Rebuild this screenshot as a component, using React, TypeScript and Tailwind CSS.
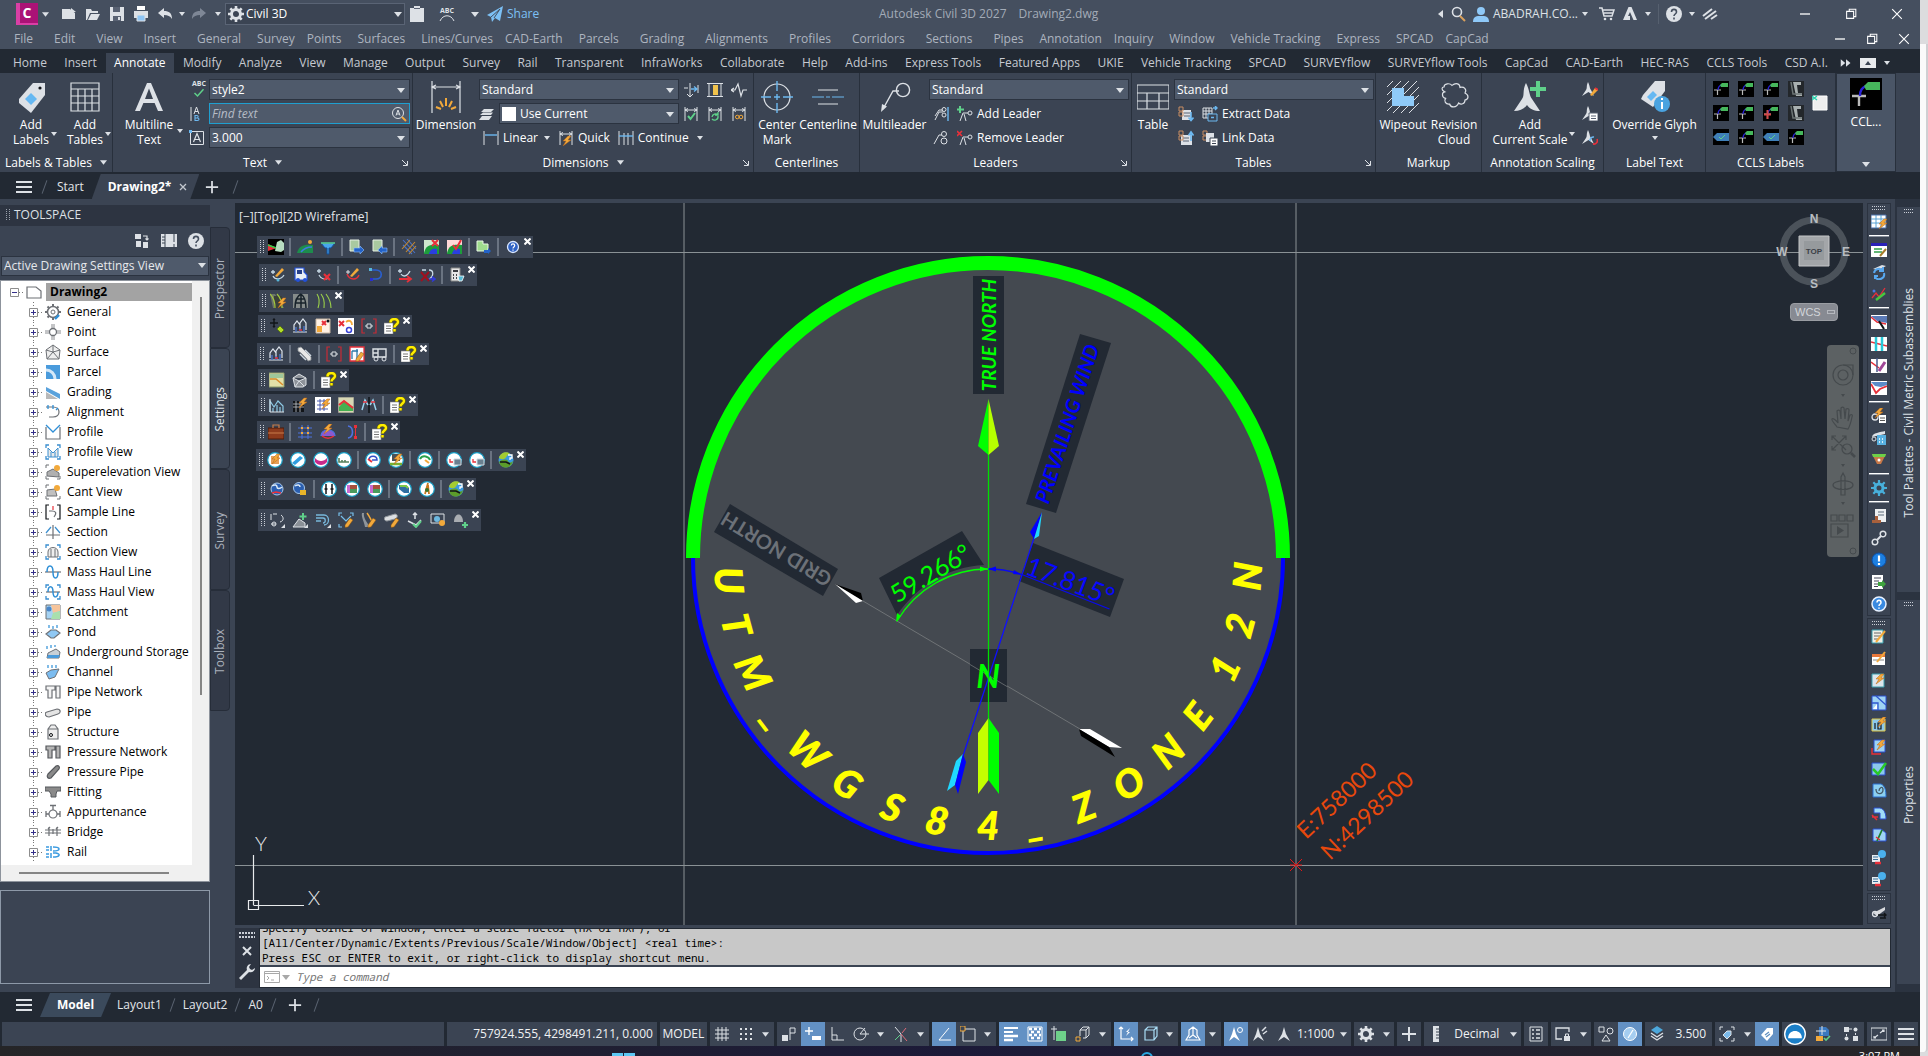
import React from 'react';

type Shape = [d: string, fill?: string, stroke?: string, width?: number];

const W = '#dde1e6';
const B = '#6cb8f0';
const G = '#5fd08a';
const O = '#f2a93b';
const R = '#e8303a';
const K = '#111418';
const D = '#6d7075';

const circle = (x: number, y: number, r: number) =>
  `M${x - r} ${y}a${r} ${r} 0 1 0 ${2 * r} 0a${r} ${r} 0 1 0 ${-2 * r} 0z`;
const box = (x: number, y: number, w: number, h: number) => `M${x} ${y}h${w}v${h}h${-w}z`;
const bolt = (x: number, y: number): Shape => [`M${x + 5} ${y}l-5 5h3l-3 5l8-6h-3l3-4z`, O, '#b8651b', 0.5];
const ring = (color = '#1aa0c8'): Shape => [circle(8, 8, 7.3), '#ffffff', color, 1.2];
const dim: Shape = ['M2 1v14M14 1v14M2 4h12M5 2.5L2 4l3 1.5M11 2.5L14 4l-3 1.5', 'none', W];
const frame: Shape = ['M1 4V1h3M12 1h3v3M15 12v3h-3M4 15H1v-3', 'none', '#3b8fd0', 1.3];
const pencil: Shape = ['M7 13l5-7 3 2-5 7-3 .5z', O, '#7a4a12', 0.5];
const question: Shape[] = [
  [box(0, 5, 9, 11), '#ffffff', '#888888', 0.6],
  ['M2 8h5M2 10.500h5M2 13h5', 'none', '#555555', 0.8],
  ['M6.500 4.500C6.500 0 14 0 14 4c0 2.500-3.500 2.500-3.500 5.500M10.500 11v2.500', 'none', '#6b6400', 3.6],
  ['M6.500 4.500C6.500 0 14 0 14 4c0 2.500-3.500 2.500-3.500 5.500M10.500 11v2.500', 'none', '#ffee00', 2.4],
];
const cclsArt: Shape[] = [
  [box(0, 0, 16, 16), '#000000'],
  ['M1 9h7M4.500 9v5', 'none', '#b9b9b9', 1.2],
  ['M5 9c0-3 1-4 3-5', 'none', '#2a22d8', 1.2],
  ['M7 4l2-2h6v4H8z', '#46b75c'],
];

const art: Record<string, Shape[]> = {
  new: [['M1 3h8l5 4v6H1z', W], ['M10 2l5 4h-5z', W]],
  open: [['M1 3h5l1 2h6v2H5l-3 7H1z', W], ['M6 8h9l-3 6H3z', W]],
  save: [['M1 1h14v14H1z', W], [box(4, 1, 7, 5), '#596273'], [box(4, 10, 8, 5), '#596273'], [box(9, 11, 2, 3), W]],
  print: [[box(4, 0, 8, 4), '#ffffff'], [box(1, 5, 14, 7), W], [box(4, 9, 8, 6), '#8fc6f5', W]],
  undo: [['M1 7l6-5v3c5 0 8 2 8 8-2-3-4-4-8-4v3z', W]],
  redo: [['M15 7L9 2v3c-5 0-8 2-8 8 2-3 4-4 8-4v3z', '#7e8796']],
  gear: [
    [circle(8, 8, 4.5), 'none', W, 3],
    ['M8 0v3M8 13v3M0 8h3M13 8h3M2.300 2.300l2.200 2.200M11.500 11.500l2.200 2.200M2.300 13.700l2.200-2.200M11.500 4.500l2.200-2.200', 'none', W, 2.6],
  ],
  clipboard: [['M1 2h4V0h6v2h4v14H1z', W], [box(5, 2, 6, 1), '#596273']],
  send: [['M0 9L16 0l-3 15-5-3-3 4-1-5z', '#7cc0f5'], ['M4 11l9-8-6 9', 'none', '#454f5f', 1]],
  search: [[circle(7, 6, 4.5), 'none', W, 1.6], ['M10 10l5 5', 'none', '#d9a05c', 2]],
  user: [[circle(8, 5, 4), '#8fc9f8'], ['M0 16c0-6 4-6 8-6s8 0 8 6z', '#8fc9f8']],
  cart: [['M0 2h3l2 8h8l2-6H4M5 7h9', 'none', W, 1.5], [circle(6, 13, 1.3), W], [circle(12, 13, 1.3), W]],
  autodesk: [['M6.500 1h3L15 14h-3.500L8 6l-2 4h2v4H1z', W]],
  help: [[circle(8, 8, 8), W], ['M5.500 6c0-3.500 5-3.500 5 0 0 2-2.500 2-2.500 4M8 11.500v2', 'none', '#454f5f', 1.6]],
  stripes: [['M1 10l9-7M3 13L14 5M9 13l6-4', 'none', W, 2]],
  minus: [['M3 8h10', 'none', '#ffffff', 1.3]],
  restore: [['M3 5h8v8H3zM6 5V2.500h7.500V11H11', 'none', '#ffffff', 1.2]],
  close: [['M2.500 2.500l11 11M13.500 2.500l-11 11', 'none', '#ffffff', 1.3]],
  closeTab: [['M2 2l12 12M14 2L2 14', 'none', '#c3c8cf', 2.6]],
  plus: [['M8 1v14M1 8h14', 'none', W, 2]],
  menu: [['M0 3h16M0 8h16M0 13h16', 'none', W, 2]],
  ff: [['M1 3l6 5-6 5zM8 3l6 5-6 5z', W]],
  tag: [['M2 9L9 1h6v6l-7 9-6-5z', W], ['M5 9l3-3 3 3-3 3z', '#66b8f2'], [circle(12.5, 3.500, 0.8), K]],
  tagInfo: [['M2 7L8 0h5v5l-6 8-6-4z', W], ['M4 8l3-3 2 2-3 3z', '#66b8f2'], [circle(11.500, 11.500, 4), '#4aa3e0'], ['M11.500 10.500v3.500M11.500 8.500v1', 'none', '#ffffff', 1]],
  table: [['M1 1h14v14H1zM1 4h14M1 7.500h14M1 11h14M4.500 4v11M8 4v11M11.500 4v11', 'none', W, 0.6]],
  tableBig: [['M0 2h16v12H0zM0 6h16M0 10h16M5 6v8M11 6v8', 'none', W, 0.6]],
  bigA: [['M1 15L7 1h2l6 14h-2.500l-1.700-4H5.200L3.500 15zM6 9h4L8 3.800z', W]],
  check: [['M2 8l4 4 8-9', 'none', G, 2]],
  abBars: [['M2 1v14', 'none', W], ['M5 8l2.500-7L10 8M6 5.500h3', 'none', W], ['M6 9.500v5h2.500c2 0 2-2.500 0-2.500H6h2c1.500 0 1.500-2.500 0-2.500z', 'none', B, 1.1]],
  boxA: [['M1.500 1.500h13v13h-13z', 'none', W], ['M4.500 12L8 3.500 11.500 12M6 9.500h4', 'none', W, 1.2], [box(0, 0, 3, 3), B]],
  findA: [[circle(7, 7, 5.500), 'none', W], ['M5 9.500L7 4l2 5.500M5.500 8h3', 'none', W], ['M11 11l4 4', 'none', O, 2]],
  dimension: [['M1 0v16M15 0v16M1 3h14M3 2L1 3l2 1M13 2l2 1-2 1', 'none', W, 0.6], ['M8 8.500v4M5 10l1.500 3M11 10l-1.500 3M3 13l2.500 1M13 13l-2.500 1', 'none', O, 1]],
  layers: [['M5 3h10l-3 3H2zM4 6.500h10l-2 2.500H1zM3 10h10l-3 4H0z', W]],
  dimLinear: [['M1 1v14M15 1v14', 'none', W], ['M2 5h12', 'none', B, 1.4]],
  dimQuick: [dim, bolt(5, 6)],
  dimContinue: [['M1 1v14M6 3v12M10 3v12M15 1v14', 'none', W], ['M1 6h14', 'none', B, 1.4]],
  dimBreak: [['M7 1v14M4 12l3 3 3-3M1 6h4M15 3v8', 'none', W], ['M8 7h6M11 4.500L14 7l-3 2.500', 'none', B, 1.4]],
  dimSpace: [['M0 1.500h16M0 14.500h16M2 1.500v13M14 1.500v13', 'none', W], [box(6, 3, 5, 10), '#f0c24b']],
  dimJog: [['M0 8h4l3-6 3 12 2-6h4M3 6L0 8l3 2', 'none', W, 1.2]],
  dimCheck: [dim, ['M5 10l2.500 3L12 7', 'none', G, 2]],
  dimUpdate: [dim, ['M5 11a3.500 3.500 0 0 1 6-2M11 10a3.500 3.500 0 0 1-6 3M11 6v3H8', 'none', G, 1.3]],
  dimInsp: [dim, [circle(6.300, 11, 1.800), 'none', O], [circle(10, 11, 1.800), 'none', O]],
  centerMark: [[circle(8, 8, 6.500), 'none', W, 0.6], ['M8 0v5M8 6.500v3M8 11v5M0 8h5M6.500 8h3M11 8h5', 'none', B, 0.7]],
  centerline: [['M3 4.500h10M3 11.500h10', 'none', W, 0.6], ['M0 8h6M7 8h2M10 8h6', 'none', B, 0.6]],
  mleader: [['M2 14L7 5h3', 'none', W, 0.7], [circle(12, 4.500, 3.300), 'none', W, 0.7], ['M1 15.500l.5-4 2.500 1.300z', W]],
  ldrAlign: [['M2 14l4-8h4M2 10l4-6h4', 'none', W], [circle(11, 3.500, 2), 'none', W], [circle(11, 9, 2), 'none', W], ['M15 1v14', 'none', B, 1.4]],
  ldrCollect: [['M1 14L6 5h3', 'none', W], [circle(11, 4, 2.500), 'none', W], [circle(11, 11, 3), 'none', W]],
  ldrAdd: [['M3 15l3-8h5M9 15L7 8', 'none', W], [circle(13, 7, 2), 'none', W], ['M3 0v7M0 3.500h7', 'none', G, 2]],
  ldrRemove: [['M3 15l3-8h5M9 15L7 8', 'none', W], [circle(13, 7, 2), 'none', W], ['M0 1l5 5M5 1L0 6', 'none', R, 1.6]],
  tblIn: [[box(4, 4, 9, 10), W], ['M6 7h6M6 10h6', 'none', '#596273'], ['M1 1h4v4H1zM1 6h4v4H1z', 'none', '#c98d62'], ['M13 6v8M10.500 11.500l2.500 3 2.500-3', 'none', B, 1.6]],
  tblOut: [[box(3, 5, 11, 10), W], ['M5 8h6M5 11h6', 'none', '#596273'], ['M1 1h4v4H1zM1 6h4v4H1z', 'none', '#c98d62'], ['M13 11V3M10.500 5.500L13 2l2.500 3.500', 'none', B, 1.6]],
  extract: [['M1 2h9v10H1zM1 5h9M1 8h9M4 2v10M7 2v10', 'none', W], [box(6, 8, 9, 7), '#3b4453', B], ['M9 11.500h3M11 2h4M13 0l2 2-2 2', 'none', B, 1.4]],
  linkData: [['M1 1h4v4H1zM1 6h4v4H1z', 'none', '#c98d62'], [box(4, 3, 8, 9), W], [box(8, 8, 8, 8), '#ffffff', '#3b4453'], ['M10 11h4M10 13.500h4', 'none', '#3b4453']],
  wipeout: [['M0 3l3-3M0 7l7-7M0 11L11 0M0 15L15 0M3 16L16 3M7 16l9-9M11 16l5-5', 'none', W, 0.5], ['M2.500 3.500h6v4h5v5h-11z', '#8fcaf8']],
  cloud: [['M3 3c0-2 3-2 4-.8 2-1.600 4-.8 4 1 2-.6 3.600 1 2.500 2.800 2 1 2 3 0 3.500 0 2-2 2.500-3.200 1.500-1 2.500-4 2.500-4.500.5-2 .3-3-1.500-2-2.800-2-.5-2-3-.5-3.300-1.800-1-1.500-2.400-.3-2.400z', 'none', W, 0.6]],
  annoScale: [['M6 1c2 4 1.500 6 3 8l4 6c-3 0-5-1-6.500-3C5 14 3 15 0 15l4-6c1.500-2 0-4 2-8z', W], ['M12 0v8M8 4h8', 'none', G, 2]],
  anno1: [['M6 1c2 4 1.500 6 3 8l3 6-5.500-4L0 15l4-6c1.500-2 0-4 2-8z', W], ['M8 14l5-7 3 2-6 6z', O], ['M13 7l3 2', 'none', R, 2]],
  anno2: [['M6 1c2 4 1.500 6 3 8l3 6-5.500-4L0 15l4-6c1.500-2 0-4 2-8z', W], [box(7, 8, 9, 8), '#ffffff', '#596273'], ['M9 11h5M9 13.500h5', 'none', '#596273']],
  anno3: [['M6 1c2 4 1.500 6 3 8l3 6-5.500-4L0 15l4-6c1.500-2 0-4 2-8z', W], ['M8 12a3.500 3.500 0 0 1 4-4', 'none', B, 1.600], ['M15 10a3.500 3.500 0 0 1-4 5', 'none', R, 1.600]],
  ccls: cclsArt,
  cclsRed: [...cclsArt, ['M4.500 5v9M1 9.500h7', 'none', '#d04a4a', 2]],
  cclsBlue: [[box(0, 0, 16, 16), '#000000'], ['M0 8l4-4h12v8H4z', '#3f7fb8'], ['M6 8l2 2 4-4', 'none', G]],
  cclsPipe: [[box(0, 0, 16, 16), '#23272b'], ['M5 1h8v3H9l1 8h4v3H8z', '#a9b0b0'], ['M3 1l2 12h9', 'none', '#6d7575', 1.5]],
  page: [[box(1, 1, 14, 14), '#eeeeee', '#ffffff'], ['M0 1l5 4M5 1L0 5', 'none', '#2ad4b0', 1.4]],
  // toolspace
  tsSwap: [[box(1, 1, 6, 5), W], [box(2, 8, 5, 6), W], [box(9, 9, 5, 6), W], ['M9 3h4v4M11.500 5.500L13 7l1.500-1.500', 'none', W, 1.2]],
  tsGrid: [[box(0, 1, 16, 13), W], ['M1 4h3M1 7h3M1 10h3M4 1v13M13 1v8M13 11v3', 'none', '#3b4453']],
  doc: [['M1 3h9l5 4v7H1z', '#ffffff', D, 1.2]],
  General: [[circle(8, 8, 5.500), 'none', D, 1.5], [circle(8, 8, 2), 'none', D], ['M8 0v2M0 8h2M8 14v2M2.500 2.500L4 4M12 4l1.500-1.500M4 12l-1.500 1.500M14 8h2', 'none', D, 2], ['M10 15l4-4', 'none', '#2f8fd6', 2.4]],
  Point: [[circle(8, 8, 3.5), 'none', D, 1.3], ['M7 0v4M9 0v4M7 12v4M9 12v4M0 7h4M0 9h4M12 7h4M12 9h4', 'none', D, 0.8]],
  Surface: [['M8 1l7 5-1 9H2L1 6zM8 1v7M1 6l7 2 7-2M8 8l-6 7M8 8l6 7', '#eeeeee', D]],
  Parcel: [[box(1, 1, 14, 14), '#4a9bdc'], ['M1 6c5 0 9 4 9 9', 'none', '#d5e8f8', 3]],
  Grading: [['M1 3v4l14 8v-5z', '#5aa2dc'], ['M1 8v7h12z', '#b9b9b9']],
  Alignment: [['M1 3h7c8 0 8 10 0 10H4', 'none', D, 1.2], ['M3 1v4M8 1v4M13 4l-2 2', 'none', '#2f8fd6', 1.3]],
  Profile: [['M1 3v12h14V3', 'none', D, 1.2], ['M1 1l7 7 7-7', 'none', '#2f8fd6', 1.3]],
  'Profile View': [frame, ['M3 13V4l5 5 5-5v9zM6 8v5M10 8v5', '#e9e9e9', '#3b8fd0']],
  'Superelevation View': [['M1 4V1h3M1 12v3h3M15 12v3h-3', 'none', D], ['M2 12V8l6-3 6 4v4z', '#b0b0b0', D], [circle(12, 4, 3), O]],
  'Cant View': [['M1 4V1h3M1 12v3h3M15 12v3h-3', 'none', D], ['M2 12V6l8-1 2 7z', '#c0c0c0', D], [circle(12, 4, 3), O]],
  'Sample Line': [['M4 1H1v14h3M12 1h3v14h-3', 'none', K, 1.2], ['M4 7h3c4 0 5 2 2 6', 'none', D, 1.2], ['M8 2v4', 'none', R, 1.2]],
  Section: [['M8 1v14M1 11h14', 'none', D, 1.2], ['M1 9l5-6M15 9l-5-6', 'none', '#3b8fd0', 1.2]],
  'Section View': [frame, ['M3 13V8c0-6 10-6 10 0v5zM6 5v8M10 5v8', '#eeeeee', D]],
  'Mass Haul Line': [['M0 8h16', 'none', D, 1.2], ['M2 8c0-8 6-8 6 0s5 8 5 0', 'none', '#2f8fd6', 1.5]],
  'Mass Haul View': [frame, ['M1 8h14', 'none', D, 1.2], ['M3 8c0-7 5-7 5 0s5 6 5 0', 'none', '#2f8fd6', 1.5]],
  Catchment: [[box(1, 1, 14, 14), '#a6d3f3', D], ['M6 1h9v6L8 9z', '#f6c49b'], ['M15 7v8H6l2-6z', '#a9e0ad'], [circle(4, 5, 2.500), '#4a86c8']],
  Pond: [['M1 10l5-4h5l4 3-6 5H6z', '#8fc8f4', D, 1.2], ['M4 1v3M8 2v3M12 1v3', 'none', '#2f8fd6', 1.2]],
  'Underground Storage': [['M2 14l1-5 8-4 4 3-1 6z', '#c9d0d6', D], ['M2 14h11l2-3-12 0z', '#4a9bdc'], ['M2 2v3M6 1v3M10 1v2', 'none', '#2f8fd6', 1.2]],
  Channel: [['M1 9l5-3 8-1-4 8-6 2z', '#7bbcf0', D], ['M3 1v3M7 1v3M11 1v3', 'none', '#2f8fd6', 1.2]],
  'Pipe Network': [['M1 2h9v4H7v8H3V6H1zM11 2h4v12h-4z', '#f4f4f4', D, 1.2]],
  Pipe: [['M2 8l10-3c4 0 4 4 1 5l-9 3c-4 0-5-4-2-5z', '#e4e4e4', D, 1.2]],
  Structure: [['M3 5l3-4h4l3 4v10H3zM3 5h10', '#eeeeee', D, 1.2], [circle(6, 11, 1.500), 'none', K]],
  'Pressure Network': [['M1 2h9v4H7v8H3V6H1zM11 2h4v12h-4z', '#b5b5b5', '#55585c', 1.2]],
  'Pressure Pipe': [['M3 10l8-8c3-1 4 1 3 3l-8 9c-3 1-5-1-3-4z', '#8a8a8a', '#55585c', 1.2]],
  Fitting: [['M0 3h16v4h-4l-1 3v3H6v-3L4 7H0z', '#8a8a8a', '#55585c']],
  Appurtenance: [[circle(8, 10, 4), 'none', D, 1.2], ['M8 1v5M5 1.500h6M1 7v6M15 7v6M1 10h3M12 10h3', 'none', D, 1.3]],
  Bridge: [['M0 6h16M0 9h16M4 3v9M8 5v5M12 3v9M3 5l2-2M11 5l2-2', 'none', D, 1.2]],
  Rail: [['M1 3h3M1 6h3M1 10h3M1 13h3M6 2v5M6 9v5M8 3c8 0 8 4 0 4M8 9h3c5 1 4 4-3 4', 'none', '#3b9be0', 1.5]],
  // drawing toolbars
  terrain: [[box(0, 0, 16, 16), '#000000'], ['M0 5l9 4-9 3z', R], ['M7 12l2-9 4-2 3 3v7l-3 2z', '#b8ddc0'], ['M0 6l8 3', 'none', '#2fd04a', 1.5]],
  hill: [['M0 14c2-8 8-9 16-8v8z', '#1d8c4c'], ['M4 13c4-5 8-5 11-5', 'none', '#3f7be0', 1.5], [circle(13, 3, 2), O]],
  funnel: [['M1 4h14l-4 5H9v6H7V9H5z', '#48a6ec', '#134e9a'], ['M1 4h14', 'none', G, 1.5]],
  exportMap: [['M1 1h9v11H1z', '#a9c9a0', '#e7efe3'], ['M5 9h6V7l4 4-4 4v-2H5z', '#2463c8', '#8fc1ff', 0.6]],
  importMap: [['M1 1h9v11H1z', '#a9c9a0', '#e7efe3'], ['M15 9h-5V7l-4 4 4 4v-2h5z', '#2463c8', '#8fc1ff', 0.6]],
  tracks: [['M2 1l12 13M2 6l9 9M6 0l9 10', 'none', '#4a73c9', 1.1], ['M1 10L9 1M5 13l9-10M8 15l7-8', 'none', '#c98a2e', 1.1]],
  mapX: [[box(0, 1, 15, 14), '#cfe8cf'], ['M0 14c2-8 6-9 15-8v9H0z', '#1d9c3c'], ['M5 15c1-5 4-6 8-5v5z', '#2a3fe0'], ['M8 1l6 6M14 1L8 7', 'none', R, 2]],
  mapCheck: [[box(0, 1, 15, 14), '#ffd9d9'], ['M0 14c2-8 6-9 15-8v9H0z', '#1d9c3c'], ['M5 15c1-5 4-6 8-5v5z', '#2a3fe0'], ['M6 6l3 4 5-9', 'none', R, 2]],
  gridMove: [['M1 2h6v3h5v7H1z', '#9fdc8e', '#e8f7e4'], ['M8 11h4V9l3 3-3 3v-1H8z', '#2463c8']],
  helpBlue: [[circle(8, 8, 5.500), '#2f62c4', '#dce8ff', 1.3], ['M6.300 6.500c0-2.300 3.400-2.300 3.400 0 0 1.500-1.700 1.500-1.700 3M8 10.500v1.200', 'none', '#ffffff', 1.200]],
  nodeEdit: [['M1 5h4M3 3v4M3 9c2 4 8 4 11-1', 'none', '#c8d9e6', 1.3], ['M5 9l7-8 2 2-7 7z', O], [circle(8, 13, 1.500), '#58b6d8']],
  bus: [['M2 1h9v4l3 3v5H2z', '#e9eef4', '#2350d8', 1.2], [box(4, 3, 5, 4), '#27408a'], [circle(5, 13, 2), '#2350d8'], [circle(12, 13, 2), '#2350d8']],
  nodeX: [['M1 4h4M3 2v4M3 8c2 4 6 5 10 3', 'none', '#c8d9e6', 1.3], ['M8 7l6 6M14 7l-6 6', 'none', R, 2.2]],
  nodeRed: [['M2 7c3 7 10 6 12 1', 'none', R, 1.500], ['M5 9l7-8 2 2-7 7z', O], ['M1 5h4M3 3v4', 'none', W]],
  curveBlue: [['M2 3h6c7 0 7 9 0 9H3', 'none', '#2a5fd0', 1.6], [box(1, 1, 3, 3), '#58b6d8'], [box(2, 11, 3, 3), '#2a2fd0']],
  nodeNext: [['M1 4h4M3 2v4M4 7c2 3 6 3 9-3', 'none', '#c8d9e6', 1.3], ['M2 12h11M10 9l4 3-4 3', 'none', R, 1.8]],
  nodeCross: [['M2 3h4M9 3c5 0 5 6 0 9', 'none', '#c8d9e6', 1.3], ['M1 5l8 9M9 5l-8 9', 'none', '#a01020', 2], ['M9 12h6M12 9.500l3 2.500-3 2.500', 'none', '#3038e0', 1.500]],
  calc: [[box(2, 1, 9, 13), '#e6e6e6', '#888888'], ['M4 4h5', 'none', K, 1.600], ['M4 8h1M7 8h1M4 11h1M7 11h1', 'none', K, 1.500], ['M9 9h6l-2 5h-3z', '#56b8d4', '#ffffff', 0.8]],
  road: [['M0 1h5l9 14H3z', '#6b7468'], [box(4, 3, 8, 12), '#3b4038'], ['M0 1c4 4 5 9 5 14M7 1c4 4 5 9 5 14', 'none', '#a4c83e', 1.2], bolt(8, 5)],
  roadGrey: [[box(0, 1, 15, 14), '#858b8a'], ['M2 15C2 8 4 3 8 1M13 15c0-6-1-11-5-14M3 10h10M4 6h8M8 1v14', 'none', '#17222a', 1.500]],
  roadDash: [['M2 15C4 9 3 4 1 1M8 15c1-8-1-11-3-14M15 15c0-6-2-10-5-14', 'none', '#9bd04a', 1.1]],
  moveTag: [['M5 1v8M1 5h8M4 2l1-1 1 1M4 8l1 1 1-1', 'none', K, 1.4], ['M8 11l3-3 4 4-3 3z', '#b4dc2a', '#5b7a10']],
  levels: [['M1 14h14M2 12V7l3-4 3 4v5M8 10V5l3-4 3 4v7', 'none', '#dfe6ee', 1.2], ['M4 14V9M8 14v-4M12 14V8', 'none', '#4b73c9', 1.4], ['M7 12h3', 'none', R, 1.5]],
  house: [[box(1, 1, 14, 14), '#fff1e4', '#c9b7a4'], ['M2 14V8h5v6z', O], ['M7 3l4 4M11 3L7 7', 'none', R, 2], [circle(13, 3, 1.500), K]],
  redraw: [[box(0, 0, 16, 16), '#ffffff'], ['M1 3l5 5M6 3L1 8', 'none', R, 2], ['M8 4c4-3 6 0 6 3', 'none', O, 1.800], [circle(11, 12, 2.500), 'none', '#3a45d8', 1.500]],
  bracket: [['M4 1H1v14h3M12 1h3v14h-3', 'none', '#c82a35', 1.2], ['M4 8h8', 'none', W], [box(6, 6, 4, 4), '#3b4453', W]],
  wrench: [['M1 2l3-1 3 3 7 7v3l-3 1-2-3-5-5-3-2z', '#e8e8e8', '#8b8f94', 0.8], ['M8 4l6 6M3 8l6 6', 'none', '#cfd8e0', 1.5]],
  sheetEdit: [[box(1, 1, 14, 14), '#fbfbff', R, 1.3], ['M3 5h6M3 5v8M8 3v10', 'none', '#2b78a8', 1.3], pencil],
  truck: [['M1 3h13v8H1zM6 3v8M1 7h5', 'none', W, 1.4], [circle(4, 13, 2), 'none', W], [circle(12, 13, 2), 'none', W]],
  q: question,
  profileMap: [[box(0, 1, 15, 14), '#e2e0a8', '#8b9a6b'], [box(1, 2, 13, 4), '#9fc79a'], ['M1 7h6l7 6', 'none', '#d88a2a', 1.500]],
  meshGrey: [['M1 6l6-4 7 4v7l-3 2H3zM1 6l6 3 7-3M7 9l-4 6M7 9l5 5', '#8e939a', W]],
  chartBlue: [['M1 15V4l4 6 4-6 5 5v6M4 15v-4M8 15V8M11 15v-5', 'none', '#8ecbe6', 1.2], ['M1 2v13h14', 'none', W]],
  gridBolt: [[box(1, 4, 11, 11), K], ['M1 7h11M1 10h11M4 4v11M8 4v11', 'none', '#bfc4ca', 0.8], bolt(7, 1)],
  tableBolt: [[box(0, 0, 16, 16), '#ffffff'], ['M2 4h11M2 8h11M2 12h11M5 2v12M9 2v12', 'none', '#3a4ca8', 0.9], bolt(7, 2)],
  redProfile: [[box(0, 0, 16, 16), '#d8d8b4', '#777777'], ['M1 10l5-6 9 6v4H1z', '#46b050'], ['M1 8l5-4 9 7', 'none', R, 2]],
  mirror: [['M8 0v16', 'none', K, 1.500], ['M1 13l3-10 3 5M15 13L12 3 9 8', 'none', '#9bd4ee', 1.500], ['M2 5h4M10 5h4', 'none', R, 1.3]],
  briefcase: [[box(0, 4, 16, 11), '#8e3b1c', '#4b1a0a'], ['M5 4V1h6v3M0 9h16', 'none', '#c87c4a', 1.2]],
  gridNodes: [['M1 4h14M1 9h14M1 13h14M5 1v14M11 1v14', 'none', '#4d72e0', 1], ['M4 4h2M10 4h2M4 9h2M10 9h2', 'none', O, 2.2]],
  dome: [['M1 12c0-8 14-8 14 0', '#8c5ad0', '#4d72e0', 1.4], ['M2 12c4 3 8 3 12 0', 'none', R, 1.500], bolt(4, 0)],
  arcNodes: [['M5 2c6 1 6 11 0 12', 'none', '#4d72e0', 1.600], [box(11, 1, 3, 3), R], [box(11, 12, 3, 3), R], ['M12.500 3v10', 'none', R]],
  rGrid: [ring(), [box(4, 4, 8, 8), '#e6a05a'], bolt(5, 2)],
  rPlane: [ring(), ['M2 11l8-7 3 2-8 7z', '#2f9de0']],
  rBowl: [ring(), ['M2 6c3 4 9 4 12 0v4c-3 4-9 4-12 0z', '#c82a8a']],
  rWall: [ring(), ['M3 6v4h10M6 8v2M9 8v2', 'none', '#57805c', 1.6]],
  rPin: [ring(), ['M4 8c0-5 8-5 8 0H7', 'none', '#3550c8', 1.500], ['M3 7l4 3', 'none', R, 1.800]],
  rRoad: [ring(), [box(4, 2, 8, 7), '#4a5358'], ['M2 12h12', 'none', '#7ab030', 2.500], bolt(6, 2)],
  rPath: [ring(), ['M3 7c3-5 9-2 10 1', 'none', '#2ba04a', 2], ['M8 8l4 3', 'none', O, 2]],
  rCopy: [ring(), [box(8, 7, 7, 6), '#6a8090', '#cfd8df'], ['M4 7v3h3', 'none', R, 1.3]],
  earth: [[circle(8, 8, 7.500), '#3a9ae0'], ['M1 6C2 0 10-1 12 2c-4 1-3 4-6 5s-4-1-5-1z', '#a4cc30'], ['M1 10c3-3 8-3 9-1s3 2 5 0c-1 8-12 9-14 1z', '#5c9c2a'], ['M2 10h6l4 2', 'none', K, 1.600], ['M10 3h4v3h-2v2', 'none', '#ffffff', 1.300]],
  globe: [[circle(8, 8, 6), '#2b5fb0', '#a6c8ec'], ['M3 5c3-2 5-1 5 1s3 2 5 0', 'none', '#dceaf6', 1.500], ['M3 12l4-1 5 1', 'none', R, 1.500]],
  globeTag: [[circle(7, 7, 5.500), '#2b5fb0', '#a6c8ec'], ['M3 5c3-2 5-1 5 1', 'none', '#dceaf6', 1.500], [box(8, 9, 6, 5), '#e8b42a']],
  rLanes: [ring(), ['M5 3v10M11 3v10M3.500 8h3M9.500 8h3M5 5v2M11 5v2', 'none', K, 1.500]],
  rColor: [ring(), [box(3, 4, 3, 8), '#c86ad0'], [box(6, 4, 7, 4), '#a8503c'], [box(6, 8, 7, 4), '#4a9a5c']],
  rStack: [ring(), ['M3 4h7l3 3v5H8L3 8z', '#2f6ea0'], ['M4 5h6l2 2', 'none', '#7cc848', 2]],
  rPerson: [ring(), ['M9 2L6 13M9 4l1 9', 'none', '#c8781e', 1.800], [circle(8, 9, 2), '#38742c']],
  gNode: [['M2 2v6M4 2h4M12 3c3 2 3 6-1 7M2 12h5', 'none', W], [circle(5, 12, 2), 'none', W], ['M12 16l4-4v4z', W]],
  gMesh: [['M1 15l6-8 6 4v4z', '#8a9097', W], ['M11 1v7M7.500 4.500h7', 'none', G, 2], ['M12 16l4-4v4z', W]],
  gContour: [['M1 3h8c6 0 6 10 0 10M1 6h7c3 0 3 5 0 5M1 9h5', 'none', '#78b8dc', 1.3], ['M12 16l4-4v4z', W]],
  gView: [['M1 4V1h3M12 1h3v3M1 12v3h3M3 4l5 5 5-5', 'none', '#78c0ec', 1.2], pencil],
  gRoad: [['M3 1c-1 5 3 9 6 14H4C3 9 0 5 1 1z', '#8f959b'], ['M6 1c3 4 4 7 6 10', 'none', O, 1.500], pencil],
  gPipe: [['M1 5l10-3c3 0 3 4 0 5L3 9C0 9 0 6 1 5z', '#dcdfe2', '#8f959b'], pencil],
  gMove: [['M8 1v6M6 3l2-2 2 2M1 9l8 4 5-5', 'none', W, 1.500], ['M6 12l3 3 5-6', 'none', G, 2]],
  gGear: [['M1 2h13v9H1z', 'none', W], [circle(7, 7, 3), '#6cb8e0'], [circle(12, 11, 3), O]],
  gHill: [['M1 10c0-10 9-10 9 0z', '#a9adb2'], ['M9 13h6M12 10v6', 'none', G, 2.200]],
  // docked strip
  vTable: [[box(0, 1, 15, 13), '#ffffff', '#4b6ea8'], ['M0 5h15M0 9h15M5 1v13M10 1v13', 'none', '#4a9ad0', 0.9], bolt(8, 5)],
  vList: [[box(0, 1, 16, 14), '#ffffff'], [box(0, 1, 16, 3), '#2a22b8'], ['M3 7h8M3 10h8', 'none', '#30a04a', 1.600], ['M9 14l6-7', 'none', '#a87c2a', 2]],
  vSync: [['M2 5l9-4 4 1-7 4z', W], ['M3 9a5 5 0 0 1 9-2M13 9a5 5 0 0 1-9 4M12 3v4H8M4 15v-3h3', 'none', '#58a8f0', 2]],
  vSpark: [['M1 12l4-5 3 4 6-9', 'none', R, 1.3], [circle(3, 5, 1.500), '#4a78e0'], ['M5 14l9-7', 'none', '#48c840', 2.500]],
  vProf: [[box(0, 1, 16, 14), '#ffffff'], ['M0 2l6 5 10 2v-7z', '#5b7bb8'], ['M0 3l6 5 9 2', 'none', R, 1.500], ['M8 7l5 8', 'none', K, 2]],
  vProfCyan: [[box(0, 1, 16, 14), '#ffffff'], ['M0 6l16 4', 'none', R, 1.500], ['M5 1v14M11 1v14', 'none', '#28c8d8', 2.500]],
  vProfPink: [[box(0, 1, 16, 14), '#ffffff'], ['M0 4l8 6', 'none', R, 1.500], ['M6 0v14', 'none', '#4a5a8a', 1.500], ['M8 13l6-9', 'none', '#a04898', 3]],
  vProfRed: [[box(0, 1, 16, 14), '#ffffff'], ['M0 2h16v3l-6 2-6-1z', '#5b8bc8'], ['M0 4l5 9 4-4 7-3', 'none', R, 1.800]],
  vSheetBolt: [[box(8, 7, 7, 8), '#ffffff'], ['M9 10h5M9 12.500h5', 'none', '#555555'], [circle(4, 9, 3), 'none', W, 1.3], bolt(4, 0)],
  vCalc: [['M1 7c0-4 9-5 13-6v3z', W], [box(6, 5, 9, 10), '#58b0e0'], ['M8 9h1M11 9h1M8 12h1M11 12h1', 'none', '#ffffff', 1.500], [circle(3, 9, 2), 'none', W]],
  vFunnel: [['M1 2h14l-5 10H6z', '#c87848'], ['M1 2h14l-1 3H2z', '#6cd048'], [circle(8, 8, 1.500), '#ffffff']],
  vGear: [[circle(8, 8, 4), 'none', '#48b0dc', 3], ['M8 0v3M8 13v3M0 8h3M13 8h3M2.300 2.300l2.200 2.200M11.500 11.500l2.200 2.200M2.300 13.700l2.200-2.200M11.500 4.500l2.200-2.200', 'none', '#48b0dc', 2.200]],
  vStamp: [[box(4, 1, 11, 13), '#eef0f2'], ['M7 4h6M7 7h6', 'none', '#5a6a7a'], ['M1 15v-3h3V8h3v4h3v3z', '#a8603c']],
  vLink: [[circle(4, 12, 2.800), 'none', W, 1.500], [circle(12, 4, 2.800), 'none', W, 1.500], ['M6 10l4-4', 'none', W, 2]],
  vInfo: [[circle(8, 8, 7), '#1d7fe0', '#0b4fa8'], ['M8 3.500v6M8 11v2', 'none', '#ffffff', 2.200]],
  vReport: [[box(1, 1, 11, 14), '#ffffff'], ['M3 4h7M3 7h5M3 10h4M3 12.500h4', 'none', '#44495a'], ['M7 8h4V6l4 4-4 4v-2H7z', '#3fa43f']],
  vHelp: [[circle(8, 8, 7), '#3a8ae0', '#e9f2ff', 1.500], ['M6 6.500c0-3 4-3 4 0 0 1.800-2 1.800-2 3.500M8 11.500v1.300', 'none', '#ffffff', 1.500]],
  sNote: [[box(1, 1, 11, 13), '#f0efe8', '#3aa0b0'], ['M3 4h7M3 7h7M3 10h4', 'none', '#666666'], ['M5 13l9-11', 'none', O, 2]],
  sSheet: [[box(1, 3, 13, 11), '#ffffff'], [box(1, 3, 13, 3), '#e8783c'], ['M2 9h11', 'none', '#888888'], ['M6 11l8-10', 'none', O, 2]],
  sBolt: [[box(1, 1, 12, 13), '#dde6ec', '#3aa0b0'], bolt(5, 1)],
  sParcel: [[box(1, 1, 14, 14), '#9fd4f4', '#2a4fd0'], ['M1 8h6v7M5 1l10 9', 'none', '#3058d0', 1.300], ['M2 14l4-5v5z', '#ffffff']],
  sParcelNum: [[box(1, 2, 13, 12), '#8cc8ec', '#e0c848'], ['M4 6v6M7 6h3v6H7z', 'none', K, 1.200], bolt(7, 0)],
  sParcelBolt: [[box(3, 1, 11, 12), '#9fd4f4', '#2a4fd0'], ['M1 9v6h9', 'none', R, 1.400], bolt(6, 1)],
  sCheck: [[box(1, 2, 13, 12), '#8cc8ec', '#2a4fd0'], ['M2 8l5 5 8-11', 'none', '#28c828', 2.500]],
  sSpiral: [['M2 1h8c4 2 5 6 5 13H2z', '#8cd0f0', '#2a6fd0'], ['M5 6c0 6 7 6 7 1s-4-2-4 1', 'none', '#455a68', 1.300]],
  sSplit: [['M3 3h6c4 1 6 5 6 11H9V8H3z', '#9fdcf8', '#2a4fd0'], ['M1 10l5 5M1 12h6', 'none', R, 1.500]],
  sPen: [['M2 2h8l5 4v8H2z', '#9fd4f4', '#2a4fd0'], ['M6 14L11 3', 'none', '#208030', 1.800], ['M5 10l4 3', 'none', R, 1.300]],
  sTrail: [[box(1, 6, 8, 7), '#e8eef2'], ['M2 8h5M2 10.500h5', 'none', '#3a6f98'], [circle(11, 5, 4), '#4ab0ec'], ['M4 14h6', 'none', R, 2.500]],
  sPipe: [['M2 9l12-6v3L6 12z', '#d8dade'], [circle(4, 10, 2.500), 'none', W, 1.300], ['M7 11h8M13 9l2 2-2 2M15 14H9', 'none', K, 1.400]],
  // status bar
  stGrid: [['M1 4h14M1 8h14M1 12h14M4 1v14M8 1v14M12 1v14', 'none', W]],
  stDots: [['M2 3h2M7 3h2M12 3h2M2 8h2M7 8h2M12 8h2M2 13h2M7 13h2M12 13h2', 'none', W, 2]],
  stInfer: [[box(1, 9, 6, 6), W], ['M9 2h5v5H9zM9 7v7', 'none', W]],
  stDyn: [['M4 1v8M0 5h8', 'none', '#ffffff', 1.400], [box(7, 10, 9, 4), '#ffffff']],
  stOrtho: [['M3 1v13h12M3 9h5v5', 'none', W]],
  stPolar: [[circle(7, 8, 6), 'none', W], ['M7 8h9M7 8l5-6', 'none', W]],
  stIso: [['M8 8L2 1M8 8v8', 'none', W], ['M8 8l6 7M9 7l4-5', 'none', '#e06a78'], ['M7 9l-5 5', 'none', G]],
  stTrack: [['M13 2L3 14h12', 'none', '#ffffff']],
  stOsnap: [['M3 3h12v12H3z', 'none', W], [box(0, 0, 5, 5), '#3b4453', O]],
  stLwt: [['M1 2h14M1 6h9', 'none', '#ffffff', 2], ['M1 10h14M1 14h9', 'none', '#ffffff', 2.600]],
  stTrans: [['M1 1h14v14H1z', 'none', '#ffffff'], ['M2 3h3M7 3h3M12 3h2M4 6h3M10 6h3M2 9h3M7 9h3M12 9h2M4 12h3M10 12h3', 'none', '#ffffff', 2.500]],
  stCycle: [[box(5, 5, 10, 10), '#6ed08a'], ['M3 0v6M0 3h6M3 6v8', 'none', W]],
  st3d: [['M5 4l3-3h6v8l-3 3H8M5 4v6M5 4h6l3-3M11 4v8', 'none', W], [box(1, 11, 4, 4), '#3b4453', O]],
  stUcs: [['M3 1v12h12M1 3l2-2 2 2M13 11l2 2-2 2', 'none', '#ffffff', 1.200], ['M12 2L8 6h2L8 10l4-4h-2z', '#ffffff']],
  stFilter: [['M3 4l3-3h9v9l-3 4H3zM3 4h9v10M12 4l3-3', 'none', '#a9dcf5', 1.200]],
  stGizmo: [['M8 1l4 3v5l3 5H1l3-5V4zM8 1v8l-4 3M8 9l4 3', 'none', '#ffffff', 1.200]],
  stA1: [['M6 1l2 7 4 7-6-4-5 4 3-7z', '#ffffff'], [circle(12, 4, 2.500), 'none', '#ffffff']],
  stA2: [['M6 1l2 7 4 7-6-4-5 4 3-7z', W], ['M10 5l4-4M11 8l4-3', 'none', W, 1.500]],
  stA3: [['M8 1l2 7 4 7-6-4-6 4 4-7z', W]],
  stRuler: [[box(5, 0, 6, 16), W], ['M8 3h3M8 6h3M8 9h3M8 12h3', 'none', '#3b4453']],
  stList: [['M2 1h12v14H2z', 'none', W], ['M4 4h2M4 8h2M4 12h2M8 4h4M8 8h4M8 12h4', 'none', W, 1.400]],
  stLock: [['M14 6V2H1v11h6', 'none', W, 1.300], [box(9, 10, 6, 5), W], ['M10.500 10V8h3v2', 'none', W]],
  stShapes: [['M1 1h5v5H1zM8 9l4 6H4z', 'none', W], [circle(12, 5, 3), 'none', W]],
  stClean: [[circle(8, 8, 6.500), '#a5cdf0', '#ffffff'], ['M6 12l5-8', 'none', '#ffffff', 1.300]],
  stLayers: [['M8 0l6 4-6 4-6-4z', '#4da8dc'], ['M2 7l6 4 6-4M2 10l6 4 6-4', 'none', W, 1.400]],
  stTagFrame: [['M1 4V1h3M12 1h3v3M15 12v3h-3M4 15H1v-3', 'none', W], ['M4 9l4-4h4v4l-4 4z', '#7ab8e8', W]],
  stTag: [['M2 9l6-7h6v6l-6 7z', '#ffffff'], ['M6 9l4-3M7 11l4-3', 'none', '#5f8fc0', 1.200]],
  stHat: [[circle(8, 8, 7.500), '#1b7fc8', '#ffffff'], ['M3 11c0-7 10-7 10 0z', '#ffffff']],
  stCad: [['M4 1h7l3 3v6H4z', '#3a78c0'], ['M1 5h10M7 0v9', 'none', W], [box(1, 10, 7, 5), O], ['M9 12l2 2 4-4', 'none', G, 1.600]],
  stBlocks: [[box(1, 1, 5, 5), W], [box(10, 10, 5, 5), W], [circle(12.500, 3.500, 2), W], [circle(3.500, 12.500, 2), W], ['M6 3h3M3.500 8v2M12.500 7v2', 'none', W]],
  stFull: [['M0 2h16v12H0z', 'none', W], ['M9 7l4-3M13 6V4h-2M7 9l-4 3M3 10v2h2', 'none', W, 1.200]],
};

function Icon({ name, className = 'size-4' }: { name: string; className?: string }) {
  return (
    <svg viewBox="0 0 16 16" className={`shrink-0 ${className}`} aria-hidden="true">
      {(art[name] || []).map(([d, fill = 'none', stroke, width = 1], i) => (
        <path key={i} d={d} fill={fill} stroke={stroke} strokeWidth={stroke ? width : undefined} />
      ))}
    </svg>
  );
}

function Caret({ className = '' }: { className?: string }) {
  return (
    <svg viewBox="0 0 8 5" className={`h-[5px] w-2 shrink-0 fill-[#dde1e6] ${className}`} aria-hidden="true">
      <path d="M0 0h8L4 5z" />
    </svg>
  );
}

function SmallCaret() {
  return (
    <svg viewBox="0 0 6 4" className="h-1 w-1.5 shrink-0 fill-[#dde1e6]" aria-hidden="true">
      <path d="M0 0h6L3 4z" />
    </svg>
  );
}

function IconButton({ name, label, className = '', icon }: { name: string; label: string; className?: string; icon?: string }) {
  return (
    <button aria-label={label} className={`flex shrink-0 items-center justify-center ${className}`}>
      <Icon name={name} className={icon} />
    </button>
  );
}

function Combo({ value, label, className = '', swatch = false }: { value: string; label: string; className?: string; swatch?: boolean }) {
  return (
    <div className={`relative h-[21px] border border-[#2b3340] bg-[#4f5a6b] ${className}`}>
      <select aria-label={label} className={`h-full w-full appearance-none bg-transparent text-white outline-none ${swatch ? 'pl-5' : 'pl-0.5'}`}>
        <option>{value}</option>
      </select>
      {swatch && <span className="pointer-events-none absolute left-0.5 top-[3px] size-3.5 bg-white" />}
      <Caret className="pointer-events-none absolute right-1 top-2" />
    </div>
  );
}

/* ---------- title and menus ---------- */

const wide = 'mr-[21px]';
const menus: [string, string][] = [
  ['File', wide], ['Edit', wide], ['View', wide], ['Insert', wide], ['General', 'mr-4'], ['Survey', 'mr-3'],
  ['Points', 'mr-4'], ['Surfaces', 'mr-4'], ['Lines/Curves', 'mr-3'], ['CAD-Earth', 'mr-4'], ['Parcels', wide],
  ['Grading', wide], ['Alignments', wide], ['Profiles', wide], ['Corridors', wide], ['Sections', wide],
  ['Pipes', 'mr-4'], ['Annotation', 'mr-3'], ['Inquiry', 'mr-4'], ['Window', 'mr-4'], ['Vehicle Tracking', 'mr-4'],
  ['Express', 'mr-4'], ['SPCAD', 'mr-3'], ['CapCad', ''],
];

function TitleBar() {
  return (
    <header className="flex h-7 shrink-0 items-center bg-[#454f5f]">
      <button className="ml-4 flex size-[22px] items-center justify-center border-b-2 border-l-4 border-[#d93fa5] bg-[#ab1276] pr-1 text-sm font-bold leading-none text-white">C</button>
      <span className="ml-1"><Caret className="w-[7px]" /></span>
      <div className="ml-2 flex items-center">
        {['new', 'open', 'save', 'print', 'undo'].map((n) => (
          <IconButton key={n} name={n} label={n} className="w-6" />
        ))}
        <span className="mx-0.5"><SmallCaret /></span>
        <IconButton name="redo" label="redo" className="w-6" />
        <span className="mx-1"><SmallCaret /></span>
      </div>
      <div className="relative h-[22px] w-[180px] border border-[#5a6475] bg-[#3b4453]">
        <Icon name="gear" className="pointer-events-none absolute left-0.5 top-0.5 size-4" />
        <select aria-label="Workspace" className="block h-5 w-full appearance-none bg-transparent pl-5 text-xs text-white outline-none">
          <option>Civil 3D</option>
        </select>
        <Caret className="pointer-events-none absolute right-0.5 top-2" />
      </div>
      <IconButton name="clipboard" label="Match properties" className="w-6" />
      <button className="ml-2 flex w-5 flex-col items-center text-[7px] font-bold leading-[8px] text-[#dde1e6]">
        ABC
        <svg viewBox="0 0 16 6" className="h-1.5 w-4 fill-none stroke-[#dde1e6]"><path d="M1 6c3-7 11-7 14 0" /></svg>
      </button>
      <Caret className="ml-3.5" />
      <button className="ml-2 flex items-center gap-1 text-xs text-[#7cc0f5]">
        <Icon name="send" />
        Share
      </button>
      <h1 className="flex-1 text-center text-xs text-[#a3abb7]">
        Autodesk Civil 3D 2027<span className="ml-3">Drawing2.dwg</span>
      </h1>
      <div className="flex items-center gap-[7px] text-xs text-[#dde1e6]">
        <svg viewBox="0 0 5 8" className="h-2 w-[5px] fill-[#dde1e6]"><path d="M5 0v8L0 4z" /></svg>
        <Icon name="search" />
        <button className="flex items-center gap-1"><Icon name="user" />ABADRAH.CO...<SmallCaret /></button>
        <IconButton name="cart" label="Cart" className="ml-1" />
        <IconButton name="autodesk" label="Apps" />
        <SmallCaret />
        <span className="h-5 w-px bg-[#56606f]" />
        <IconButton name="help" label="Help" />
        <SmallCaret />
        <IconButton name="stripes" label="Assistant" />
      </div>
      <div className="ml-16 flex">
        <IconButton name="minus" label="Minimize" className="w-[46px]" />
        <IconButton name="restore" label="Restore" className="w-[46px]" icon="size-3.5" />
        <IconButton name="close" label="Close" className="w-[46px]" icon="size-3.5" />
      </div>
    </header>
  );
}

function MenuBar() {
  return (
    <nav className="flex h-[21px] shrink-0 items-center bg-[#454f5f] pl-3.5 text-xs text-[#adb4bf]">
      {menus.map(([label, gap]) => (
        <button key={label} className={`shrink-0 ${gap}`}>{label}</button>
      ))}
      <div className="ml-auto flex">
        <IconButton name="minus" label="Minimize drawing" className="w-8" />
        <IconButton name="restore" label="Restore drawing" className="w-8" icon="size-3.5" />
        <IconButton name="close" label="Close drawing" className="w-8" icon="size-3.5" />
      </div>
    </nav>
  );
}

const ribbonTabs = [
  'Home', 'Insert', 'Annotate', 'Modify', 'Analyze', 'View', 'Manage', 'Output', 'Survey', 'Rail', 'Transparent',
  'InfraWorks', 'Collaborate', 'Help', 'Add-ins', 'Express Tools', 'Featured Apps', 'UKIE', 'Vehicle Tracking',
  'SPCAD', 'SURVEYflow', 'SURVEYflow Tools', 'CapCad', 'CAD-Earth', 'HEC-RAS', 'CCLS Tools', 'CSD A.I.',
];

function RibbonTabs() {
  return (
    <nav className="flex h-6 shrink-0 items-end bg-[#222933] pl-[5px] text-xs">
      <div className="flex flex-1 justify-between">
        {ribbonTabs.map((t) => (
          <button key={t} className={`h-5 shrink-0 px-2 ${t === 'Annotate' ? 'bg-[#3b4453] text-white' : 'text-[#c6cad1]'}`}>{t}</button>
        ))}
      </div>
      <div className="flex h-5 w-[84px] items-center gap-2 pl-1">
        <Icon name="ff" className="size-3" />
        <button aria-label="Minimize ribbon" className="flex h-2.5 w-4 items-center justify-center bg-[#e8eaed]">
          <svg viewBox="0 0 6 4" className="h-1 w-1.5 fill-[#3b4453]"><path d="M0 4h6L3 0z" /></svg>
        </button>
        <SmallCaret />
      </div>
    </nav>
  );
}

/* ---------- ribbon ---------- */

function Panel({ title, className, caret, launcher, children }: { title: string; className: string; caret?: boolean; launcher?: boolean; children: React.ReactNode }) {
  return (
    <section className={`relative flex shrink-0 flex-col border-r border-[#28303c] ${className}`}>
      <div className="flex h-20 items-start pt-1.5">{children}</div>
      <h2 className="flex h-[19px] items-center justify-center gap-2 text-white">
        {title}
        {caret && <Caret className="h-1 w-[7px]" />}
      </h2>
      {launcher && (
        <svg viewBox="0 0 6 6" className="absolute bottom-1.5 right-1 size-1.5 fill-none stroke-[#dde1e6]"><path d="M0 0l5 5M5.500 1v4.500H1" /></svg>
      )}
    </section>
  );
}

function BigButton({ icon, lines, className, caret }: { icon: string; lines: string[]; className: string; caret?: boolean }) {
  return (
    <button className={`flex shrink-0 flex-col items-center text-white ${className}`}>
      <Icon name={icon} className="mt-0.5 size-8" />
      <span className="mt-1 whitespace-nowrap leading-[15px]">{lines[0]}</span>
      <span className="relative whitespace-nowrap leading-[15px]">
        {lines[1]}
        {caret && <span className="absolute -right-2 top-0"><SmallCaret /></span>}
      </span>
    </button>
  );
}

function Ribbon() {
  return (
    <div className="flex h-[99px] shrink-0 bg-[#3b4453] text-xs">
      <Panel title="Labels & Tables" caret className="w-[113px]">
        <BigButton icon="tag" lines={['Add', 'Labels']} caret className="ml-1 w-[54px]" />
        <BigButton icon="table" lines={['Add', 'Tables']} caret className="w-[54px]" />
      </Panel>
      <Panel title="Text" caret launcher className="w-[300px]">
        <BigButton icon="bigA" lines={['Multiline', 'Text']} className="ml-2 w-[56px]" />
        <div className="mt-[50px] w-3"><SmallCaret /></div>
        <div className="mr-0.5 flex flex-1 flex-col gap-[3px]">
          <div className="flex items-center">
            <span className="flex w-5 flex-col items-center text-[7px] font-bold leading-[7px] text-[#dde1e6]">ABC<Icon name="check" className="size-3" /></span>
            <Combo value="style2" label="Text style" className="flex-1" />
          </div>
          <div className="flex items-center">
            <span className="w-5"><Icon name="abBars" /></span>
            <div className="flex h-[21px] flex-1 items-center border border-[#1f9fd0] bg-[#4f5a6b] pr-0.5">
              <input aria-label="Find text" placeholder="Find text" className="w-full min-w-0 bg-transparent pl-0.5 italic text-white outline-none placeholder:text-[#b6bcc6]" />
              <Icon name="findA" />
            </div>
          </div>
          <div className="flex items-center">
            <span className="w-5"><Icon name="boxA" /></span>
            <Combo value="3.000" label="Text height" className="flex-1" />
          </div>
        </div>
      </Panel>
      <Panel title="Dimensions" caret launcher className="w-[341px]">
        <BigButton icon="dimension" lines={['Dimension', '']} className="w-[66px]" />
        <div className="flex flex-col gap-[3px]">
          <div className="flex items-center">
            <Combo value="Standard" label="Dimension style" className="w-[200px]" />
            <div className="ml-1 flex gap-2">
              <Icon name="dimBreak" /><Icon name="dimSpace" /><Icon name="dimJog" />
            </div>
          </div>
          <div className="flex items-center">
            <span className="w-5"><Icon name="layers" /></span>
            <Combo value="Use Current" label="Dimension layer" swatch className="w-[180px]" />
            <div className="ml-1 flex gap-2">
              <Icon name="dimCheck" /><Icon name="dimUpdate" /><Icon name="dimInsp" />
            </div>
          </div>
          <div className="flex h-[21px] items-center text-white">
            <button className="flex items-center gap-1 pl-1"><Icon name="dimLinear" />Linear</button>
            <span className="ml-1.5"><SmallCaret /></span>
            <button className="ml-2 flex items-center gap-1"><Icon name="dimQuick" />Quick</button>
            <button className="ml-2 flex items-center gap-1"><Icon name="dimContinue" />Continue</button>
            <span className="ml-2"><SmallCaret /></span>
          </div>
        </div>
      </Panel>
      <Panel title="Centerlines" className="w-[106px]">
        <BigButton icon="centerMark" lines={['Center', 'Mark']} className="w-[46px]" />
        <BigButton icon="centerline" lines={['Centerline', '']} className="w-[56px]" />
      </Panel>
      <Panel title="Leaders" launcher className="w-[272px]">
        <BigButton icon="mleader" lines={['Multileader', '']} className="w-[69px]" />
        <div className="flex flex-col gap-[3px]">
          <Combo value="Standard" label="Multileader style" className="w-[200px]" />
          <div className="flex h-[21px] items-center gap-2 pl-1 text-white">
            <Icon name="ldrAlign" />
            <button className="flex items-center gap-1"><Icon name="ldrAdd" />Add Leader</button>
          </div>
          <div className="flex h-[21px] items-center gap-2 pl-1 text-white">
            <Icon name="ldrCollect" />
            <button className="flex items-center gap-1"><Icon name="ldrRemove" />Remove Leader</button>
          </div>
        </div>
      </Panel>
      <Panel title="Tables" launcher className="w-[244px]">
        <BigButton icon="tableBig" lines={['Table', '']} className="w-[42px]" />
        <div className="flex flex-col gap-[3px]">
          <Combo value="Standard" label="Table style" className="w-[200px]" />
          <div className="flex h-[21px] items-center gap-2 pl-1 text-white">
            <Icon name="tblIn" />
            <button className="flex items-center gap-1"><Icon name="extract" />Extract Data</button>
          </div>
          <div className="flex h-[21px] items-center gap-2 pl-1 text-white">
            <Icon name="tblOut" />
            <button className="flex items-center gap-1"><Icon name="linkData" />Link Data</button>
          </div>
        </div>
      </Panel>
      <Panel title="Markup" className="w-[106px]">
        <BigButton icon="wipeout" lines={['Wipeout', '']} className="ml-0.5 w-[50px]" />
        <BigButton icon="cloud" lines={['Revision', 'Cloud']} className="w-[52px]" />
      </Panel>
      <Panel title="Annotation Scaling" className="w-[122px]">
        <BigButton icon="annoScale" lines={['Add', 'Current Scale']} caret className="w-[96px]" />
        <div className="flex flex-col gap-2 pl-1 pt-0.5">
          <Icon name="anno1" /><Icon name="anno2" /><Icon name="anno3" />
        </div>
      </Panel>
      <Panel title="Label Text" className="w-[102px]">
        <button className="flex w-full flex-col items-center text-white">
          <Icon name="tagInfo" className="mt-0.5 size-8" />
          <span className="mt-1 whitespace-nowrap leading-[15px]">Override Glyph</span>
          <span className="pt-1"><SmallCaret /></span>
        </button>
      </Panel>
      <Panel title="CCLS Labels" className="w-[130px]">
        <div className="ml-[7px] grid grid-cols-4 gap-x-[9px] gap-y-2 pt-0.5">
          {['ccls', 'ccls', 'ccls', 'cclsPipe', 'ccls', 'ccls', 'cclsRed', 'cclsPipe', 'cclsBlue', 'ccls', 'cclsBlue', 'ccls'].map((n, i) => (
            <IconButton key={i} name={n} label={`Label ${i + 1}`} />
          ))}
        </div>
        <div className="ml-2 mt-4"><Icon name="page" /></div>
      </Panel>
      <button className="flex w-[60px] shrink-0 flex-col items-center border border-[#28303c] bg-[#4a5566] pt-1 text-white">
        <Icon name="ccls" className="size-8" />
        <span className="mt-1">CCL...</span>
        <Caret className="mt-auto mb-1" />
      </button>
    </div>
  );
}

function Slash() {
  return <span className="block h-3.5 w-px shrink-0 rotate-[20deg] bg-[#5a6371]" />;
}

function FileTabs() {
  return (
    <div className="flex h-[27px] shrink-0 items-center bg-[#222933] pt-0.5 text-xs text-[#e3e6ea]">
      <IconButton name="menu" label="Drawings menu" className="ml-4" />
      <span className="ml-3"><Slash /></span>
      <button className="ml-3">Start</button>
      <div className="ml-2 flex h-full items-center bg-[#3b4453] pl-4 pr-3 [clip-path:polygon(9px_0,100%_0,calc(100%-9px)_100%,0_100%)]">
        <button className="font-bold text-white">Drawing2*</button>
        <IconButton name="closeTab" label="Close Drawing2" className="ml-2" icon="size-2" />
      </div>
      <IconButton name="plus" label="New drawing" className="ml-1.5" icon="size-3.5" />
      <span className="ml-4"><Slash /></span>
    </div>
  );
}

/* ---------- toolspace ---------- */

const treeItems = [
  'General', 'Point', 'Surface', 'Parcel', 'Grading', 'Alignment', 'Profile', 'Profile View', 'Superelevation View',
  'Cant View', 'Sample Line', 'Section', 'Section View', 'Mass Haul Line', 'Mass Haul View', 'Catchment', 'Pond',
  'Underground Storage', 'Channel', 'Pipe Network', 'Pipe', 'Structure', 'Pressure Network', 'Pressure Pipe',
  'Fitting', 'Appurtenance', 'Bridge', 'Rail',
];

function Expander({ open = false }: { open?: boolean }) {
  return (
    <svg viewBox="0 0 16 20" className="h-5 w-4 shrink-0 fill-none" aria-hidden="true">
      {!open && <path d="M4.500 0v20" stroke="#777777" strokeDasharray="1 2" />}
      <path d="M9 10.500h6" stroke="#777777" strokeDasharray="1 2" />
      <path d="M.5 6.500h8v8h-8z" stroke="#8d8d8d" fill="#ffffff" />
      <path d={open ? 'M2 10.500h5' : 'M2 10.500h5M4.500 8v5'} stroke="#35308a" />
    </svg>
  );
}

function Toolspace() {
  return (
    <aside className="flex w-[210px] shrink-0 flex-col pb-2 pt-1.5">
      <h2 className="flex h-[21px] shrink-0 items-center gap-1 bg-[#2d3441] pb-0.5 pl-1.5 text-xs text-[#dde1e6]">
        <svg viewBox="0 0 4 12" className="h-3 w-1 fill-none stroke-[#9aa1ac]"><path d="M.5 0v12M3.500 0v12" strokeDasharray="1 1" /></svg>
        TOOLSPACE
      </h2>
      <div className="flex h-[30px] shrink-0 items-center justify-end gap-[11px] pr-1.5">
        <IconButton name="tsSwap" label="Toggle item view" />
        <IconButton name="tsGrid" label="Panorama" />
        <IconButton name="help" label="Toolspace help" />
      </div>
      <div className="relative mx-px h-5 shrink-0 border border-[#2b3340] bg-[#4f5a6b]">
        <select aria-label="Settings view" className="block h-[18px] w-full appearance-none bg-transparent pl-0.5 text-xs text-[#e6e8eb] outline-none">
          <option>Active Drawing Settings View</option>
        </select>
        <Caret className="pointer-events-none absolute right-0.5 top-1.5" />
      </div>
      <div className="mt-1 flex min-h-0 flex-[603] flex-col border border-[#8d939c] bg-[#f0f0f0]">
        <div className="flex min-h-0 flex-1">
          <ul className="min-w-0 flex-1 overflow-hidden bg-white pt-px text-xs text-black">
            <li className="flex h-5 items-center pl-[9px]">
              <Expander open />
              <Icon name="doc" />
              <button className="ml-1 h-[18px] flex-1 bg-[#a3a3a3] pl-1 text-left font-bold">Drawing2</button>
            </li>
            {treeItems.map((item) => (
              <li key={item} className="flex h-5 items-center pl-7">
                <Expander />
                <Icon name={item} />
                <button className="ml-1.5 whitespace-nowrap">{item}</button>
              </li>
            ))}
          </ul>
          <div className="flex w-[17px] justify-center pt-4"><span className="h-[398px] w-0.5 bg-[#858585]" /></div>
        </div>
        <div className="flex h-4 shrink-0 items-center pl-[18px]"><span className="h-0.5 w-[150px] bg-[#858585]" /></div>
      </div>
      <div className="mt-2 flex-[93] border border-[#8d99a8]" />
    </aside>
  );
}

function SideTabs() {
  return (
    <div className="flex w-5 shrink-0 flex-col pt-7">
      {['Prospector', 'Settings', 'Survey', 'Toolbox'].map((t) => (
        <button key={t} className={`flex h-[121px] items-center justify-center rounded-r border border-[#262d39] pt-0.5 text-xs ${t === 'Settings' ? 'bg-[#3b4453] text-[#dde1e6]' : 'bg-[#323947] text-[#aab1bc]'}`}>
          <span className="rotate-180 [writing-mode:vertical-rl]">{t}</span>
        </button>
      ))}
    </div>
  );
}

/* ---------- drawing ---------- */

const CX = 988;
const CY = 558;

// text around the lower half of the dial: glyph, angle from straight down
const dial: [string, number][] = [
  ['U', 85], ['T', 75], ['M', 64], ['_', 53], ['W', 43], ['G', 32], ['S', 21], ['8', 11], ['4', 0], ['_', -10],
  ['Z', -21], ['O', -32], ['N', -43], ['E', -53], ['1', -65], ['2', -75], ['N', -86],
];

// the letters sit slightly closer to the centre towards the sides
const baseline = (angle: number) => 282 - 8 * Math.sin((angle * Math.PI) / 180) ** 2;

function DrawingSvg() {
  return (
    <svg viewBox="235 203 1628 722" preserveAspectRatio="xMidYMid slice" className="absolute inset-0 h-full w-full" fontFamily="Lato, 'Open Sans', sans-serif">
      <path d="M684 203v722M1296 203v722M200 252.500h1700M200 865.500h1700" stroke="#8a9195" fill="none" />
      <circle cx={CX} cy={CY} r="295" fill="#444950" stroke="#0000ff" strokeWidth="4" />
      <path d={`M${CX - 295} ${CY}a295 295 0 0 1 590 0`} fill="none" stroke="#00ff00" strokeWidth="14" />

      {dial.map(([ch, angle], i) => (
        <text key={i} x={CX} y={CY + baseline(angle)} transform={`rotate(${angle} ${CX} ${CY})`} textAnchor="middle" fontSize="39" fontWeight="800" fontStyle="italic" fill="#ffff00">
          {ch}
        </text>
      ))}

      <g fill="#222933">
        <path d="M973 276h31v118h-31z" />
        <path d="M1080 334l31 9-55 170-30-9z" />
        <path d="M730 504l108 65-15 27-109-64z" />
        <path d="M879 578l83-47 22 34c-36 2-66 20-87 50z" />
        <path d="M1033 543l91 36-14 38-91-36z" />
      </g>

      <path d="M863 601l217 128" stroke="#6f7376" />
      <path d="M970 649h37v53h-37z" fill="#222933" />
      <path d="M970 664.500l37 22" stroke="#6f7376" strokeWidth="0.8" />
      <text x="988" y="688" textAnchor="middle" fontSize="33" fontWeight="700" fontStyle="italic" fill="#00ff00">N</text>
      <path d="M1034 538L963 756" stroke="#1010ff" strokeWidth="1.3" />
      <path d="M988.500 452v268" stroke="#00e000" strokeWidth="1.3" />

      <text transform="translate(996 335) rotate(-90)" textAnchor="middle" fontSize="19" fontWeight="700" fontStyle="italic" fill="#00ff00">TRUE NORTH</text>
      <text transform="translate(1074 426) rotate(-72)" textAnchor="middle" fontSize="20" fontWeight="700" fontStyle="italic" fill="#0000ff">PREVAILING WIND</text>
      <text transform="translate(780 543) rotate(211)" textAnchor="middle" fontSize="20" fontWeight="700" fill="#6c7178">GRID NORTH</text>
      <text transform="translate(935 581) rotate(-31)" textAnchor="middle" fontSize="25" fill="#00ff00">59.266°</text>
      <text transform="translate(1067 590) rotate(21)" textAnchor="middle" fontSize="26" fill="#0808ff">17.815°</text>

      <path d="M988.500 569A106 106 0 0 0 897 621" fill="none" stroke="#00ff00" strokeWidth="1.3" />
      <path d="M980 566.500l8 2.500-8 2.500zM896 622l1-9 4 3z" fill="#00ff00" />
      <path d="M988.500 569a106 106 0 0 1 32 5l89 35" fill="none" stroke="#0a0af0" strokeWidth="1.3" />
      <path d="M988 569l8-2.500v5zM1022 575l-9-1 1-4z" fill="#0000ff" />

      <path d="M988.500 399L978 446l10.500 9z" fill="#00ff00" />
      <path d="M988.500 399L999 446l-10.500 9z" fill="#b6ff00" />
      <path d="M988.500 718L978 733v61l10.500-14z" fill="#c4ff00" />
      <path d="M988.500 718L999 733v61l-10.500-14z" fill="#00ff00" />
      <path d="M1042 512l-12 20 4 7z" fill="#0000ff" />
      <path d="M1042 512l-3 24-5 3z" fill="#20d8ff" />
      <path d="M963 754l-7 7-9 30 8-6z" fill="#20d8ff" />
      <path d="M963 754l3 8-8 32-3-9z" fill="#0000ff" />
      <path d="M835 584l26 9 2 8z" fill="#000000" />
      <path d="M835 584l21 19 7-2z" fill="#ffffff" />
      <path d="M1079 729h11l32 19-13-1z" fill="#ffffff" />
      <path d="M1079 729l2 7 34 21-6-10z" fill="#000000" />

      <g fill="#e8480c" fontSize="23">
        <text transform="translate(1306 840) rotate(-43)">E:758000</text>
        <text transform="translate(1330 861) rotate(-43)">N:4298500</text>
      </g>
      <path d="M1290 859l12 12M1302 859l-12 12M1290 865h12" stroke="#e01818" />

      <path d="M248.500 900.500h10v9h-10zM253.500 905V855M253.500 905.500H304" stroke="#e8eaec" fill="none" strokeWidth="1.2" />
      <g fill="#e8eaec" fontSize="20" fontWeight="300" textAnchor="middle">
        <text x="261" y="851">Y</text>
        <text x="314" y="905">X</text>
      </g>
    </svg>
  );
}

// '|' marks a separator
const floatBars: { at: string; tools: string[] }[] = [
  { at: 'left-[22px] top-[33px]', tools: ['terrain', '|', 'hill', 'funnel', '|', 'exportMap', 'importMap', '|', 'tracks', 'mapX', 'mapCheck', '|', 'gridMove', '|', 'helpBlue'] },
  { at: 'left-[24px] top-[61px]', tools: ['nodeEdit', 'bus', 'nodeX', '|', 'nodeRed', 'curveBlue', '|', 'nodeNext', 'nodeCross', '|', 'calc'] },
  { at: 'left-[24px] top-[87px]', tools: ['road', 'roadGrey', 'roadDash'] },
  { at: 'left-[23px] top-[112px]', tools: ['moveTag', 'levels', 'house', 'redraw', 'bracket', 'q'] },
  { at: 'left-[22px] top-[140px]', tools: ['levels', '|', 'wrench', '|', 'bracket', 'sheetEdit', 'truck', '|', 'q'] },
  { at: 'left-[23px] top-[166px]', tools: ['profileMap', 'meshGrey', '|', 'q'] },
  { at: 'left-[23px] top-[191px]', tools: ['chartBlue', 'gridBolt', 'tableBolt', 'redProfile', 'mirror', '|', 'q'] },
  { at: 'left-[22px] top-[218px]', tools: ['briefcase', '|', 'gridNodes', 'dome', 'arcNodes', '|', 'q'] },
  { at: 'left-[21px] top-[246px]', tools: ['rGrid', 'rPlane', 'rBowl', 'rWall', '|', 'rPin', 'rRoad', '|', 'rPath', '|', 'rCopy', 'rCopy', '|', 'earth'] },
  { at: 'left-[23px] top-[275px]', tools: ['globe', 'globeTag', '|', 'rLanes', 'rColor', 'rColor', '|', 'rStack', 'rPerson', '|', 'earth'] },
  { at: 'left-[23px] top-[306px]', tools: ['gNode', 'gMesh', 'gContour', 'gView', 'gRoad', 'gPipe', 'gMove', 'gGear', 'gHill'] },
];

function FloatBar({ at, tools }: { at: string; tools: string[] }) {
  return (
    <div className={`absolute flex h-[22px] items-center bg-[#3b4453] ${at}`}>
      <svg viewBox="0 0 4 14" className="ml-[3px] h-3.5 w-1 fill-none stroke-[#c9ced6]"><path d="M.5 0v14M3.500 0v14" strokeDasharray="1 1" /></svg>
      {tools.map((t, i) =>
        t === '|' ? <span key={i} className="mx-0.5 h-[18px] w-0.5 bg-[#6a7381]" /> : <IconButton key={i} name={t} label={t} className="w-[23px]" />
      )}
      <button aria-label="Close toolbar" className="mt-0.5 flex w-[9px] self-start">
        <svg viewBox="0 0 7 7" className="size-[7px] stroke-white stroke-2"><path d="M.5 .5l6 6M6.500 .5l-6 6" /></svg>
      </button>
    </div>
  );
}

function ViewCube() {
  return (
    <div className="absolute right-[11px] top-2 flex w-[76px] flex-col items-center">
      <svg viewBox="0 -3 76 82" className="h-[82px] w-[76px]" fontFamily="'Liberation Sans', sans-serif" fontWeight="700" textAnchor="middle">
        <circle cx="38" cy="37" r="31" fill="none" stroke="#4b525a" strokeWidth="7" />
        <path d="M23 22h30v30H23z" fill="#a3a6a9" stroke="#c4c6c8" />
        <path d="M28 27h20v19H28z" fill="#969a9d" />
        <text x="38" y="40" fontSize="8" fill="#3b4047">TOP</text>
        <g fontSize="12" fill="#b9bdc1">
          <text x="38" y="9">N</text>
          <text x="38" y="74">S</text>
          <text x="6" y="42">W</text>
          <text x="70" y="42">E</text>
        </g>
      </svg>
      <button className="mt-2.5 flex h-[18px] w-[48px] items-center gap-1.5 rounded border border-[#9a9da3] bg-[#878a92] pl-1 font-['Liberation_Sans',sans-serif] text-[11px] text-[#d2d5d9]">
        WCS
        <span className="h-1 w-2 border border-[#b5b8be]" />
      </button>
    </div>
  );
}

function NavBar() {
  return (
    <div className="absolute right-1 top-[142px] rounded bg-[#5c6163]">
      <svg viewBox="0 0 32 212" className="h-[212px] w-8 fill-none stroke-[#454a4d]" strokeWidth="1.200">
        <circle cx="26" cy="6" r="3" strokeWidth="1" />
        <circle cx="16" cy="30" r="10" />
        <circle cx="16" cy="30" r="5" />
        <path d="M26 30V20H16" />
        <path d="M10 82c-3-4-6-7-5-8s4 1 6 4l-1-12c2-2 3 0 3 0l1 8V63c2-2 3 0 3 0l1 11 1-10c2-1 3 0 3 1l-1 11 2-6c2-1 3 0 2 2-1 5-2 9-4 12z" />
        <path d="M5 91l14 14M5 105L19 91M5 95v-4h4M19 95v-4h-4M5 101v4h4" />
        <circle cx="20" cy="104" r="5" />
        <path d="M24 108l4 4" strokeWidth="2.500" />
        <path d="M14 150v-18l2-4 2 4v18zM6 140c0 6 20 6 20 0s-20-5-20 0" />
        <path d="M4 170h6v6H4zM12 170h6v6h-6zM20 170h6v6h-6zM4 179h17v13H4z" />
        <path d="M10 181v9l7-4.500zM14 49h4l-2 3zM14 119h4l-2 3zM14 157h4l-2 3z" className="fill-[#454a4d]" stroke="none" />
        <circle cx="26" cy="206" r="3" strokeWidth="1" />
      </svg>
    </div>
  );
}

function Canvas() {
  return (
    <main className="relative min-w-0 flex-1 overflow-hidden bg-[#222933]">
      <DrawingSvg />
      <div className="absolute left-1 top-1.5 text-xs text-[#e3e6ea]">[−][Top][2D Wireframe]</div>
      {floatBars.map((bar) => (
        <FloatBar key={bar.at} {...bar} />
      ))}
      <ViewCube />
      <NavBar />
    </main>
  );
}

const dockBars: string[][] = [
  ['vTable', '|', 'vList', 'vSync', 'vSpark', '|', 'vProf', 'vProfCyan', 'vProfPink', 'vProfRed', '|', 'vSheetBolt', 'vCalc', 'vFunnel', '|', 'vGear', '|', 'vStamp', 'vLink', 'vInfo', 'vReport', 'vHelp'],
  ['sNote', 'sSheet', 'sBolt', 'sParcel', 'sParcelNum', 'sParcelBolt', 'sCheck', 'sSpiral', 'sSplit', 'sPen', 'sTrail', 'sTrail'],
  ['sPipe'],
];

function DockStrip() {
  return (
    <div className="ml-1 flex w-6 shrink-0 flex-col overflow-hidden">
      {dockBars.map((tools, n) => (
        <div key={n} className="mb-0.5 flex shrink-0 flex-col items-center border border-[#2b3340]">
          <svg viewBox="0 0 14 4" className="mb-px mt-0.5 h-1 w-3.5 fill-none stroke-[#c9ced6]"><path d="M0 .5h14M0 3.500h14" strokeDasharray="1 1" /></svg>
          {tools.map((t, i) =>
            t === '|' ? <span key={i} className="my-0.5 h-0.5 w-5 border-b border-[#8a919c] bg-white" /> : <IconButton key={i} name={t} label={t} className="h-[22px] w-full" />
          )}
        </div>
      ))}
    </div>
  );
}

function Palettes() {
  return (
    <div className="ml-1 flex w-[25px] shrink-0 flex-col gap-2 bg-[#2b3340] pb-2 pl-0.5 pt-2">
      {['Tool Palettes - Civil Metric Subassemblies', 'Properties'].map((t) => (
        <div key={t} className="flex flex-1 flex-col items-center bg-[#3b4453] pt-0.5 text-xs text-[#dde1e6]">
          <svg viewBox="0 0 10 4" className="h-1 w-2.5 fill-none stroke-[#c9ced6]"><path d="M0 .5h10M0 3.500h10" strokeDasharray="1 1" /></svg>
          <div className="flex flex-1 items-center">
            <span className="rotate-180 whitespace-nowrap [writing-mode:vertical-rl]">{t}</span>
          </div>
        </div>
      ))}
    </div>
  );
}

function CommandLine() {
  return (
    <div className="mt-[3px] flex h-[60px] shrink-0 font-['Noto_Sans_Mono','DejaVu_Sans_Mono',monospace] text-[11px]">
      <div className="flex w-6 shrink-0 flex-col items-center gap-2 bg-[#2d3441] pt-1">
        <svg viewBox="0 0 16 6" className="h-1.5 w-4 fill-none stroke-[#c9ced6] stroke-2"><path d="M0 1h16M0 5h16" strokeDasharray="2 1" /></svg>
        <button aria-label="Close command line"><svg viewBox="0 0 10 10" className="size-2.5 stroke-[#dde1e6] stroke-2"><path d="M1 1l8 8M9 1L1 9" /></svg></button>
        <button aria-label="Customize">
          <svg viewBox="0 0 16 16" className="size-4 fill-[#dde1e6]"><path d="M0 14l8-8c-1-3 1-6 4-6l-2 3 1 2 2 1 3-2c0 3-3 5-6 4l-8 8z" /></svg>
        </button>
      </div>
      <div className="flex min-w-0 flex-1 flex-col border border-[#222933]">
        <div className="flex h-9 flex-col justify-end overflow-hidden bg-[#c8c8c8] pl-0.5 leading-[15px] text-black">
          <p>Specify corner of window, enter a scale factor (nX or nXP), or</p>
          <p>[All/Center/Dynamic/Extents/Previous/Scale/Window/Object] &lt;real time&gt;:</p>
          <p>Press ESC or ENTER to exit, or right-click to display shortcut menu.</p>
        </div>
        <div className="mt-0.5 flex flex-1 items-center bg-white pl-1">
          <svg viewBox="0 0 16 12" className="h-3 w-4 fill-none stroke-[#a8a8a8]"><path d="M.5 .5h15v11H.5zM.5 2.500h15M3 5l2 2-2 2M7 9h3" /></svg>
          <svg viewBox="0 0 8 5" className="ml-0.5 h-[5px] w-2 fill-[#a8a8a8]"><path d="M0 0h8L4 5z" /></svg>
          <input aria-label="Command" placeholder="Type a command" className="ml-1.5 flex-1 bg-transparent italic text-black outline-none placeholder:text-[#757575]" />
        </div>
      </div>
    </div>
  );
}

/* ---------- bottom bars ---------- */

function LayoutTabs() {
  return (
    <div className="flex h-[30px] shrink-0 bg-[#222933] text-xs text-[#e3e6ea]">
      <div className="flex h-[26px] items-center">
        <IconButton name="menu" label="Layouts menu" className="ml-4" />
        <button className="ml-2 flex h-6 items-center bg-[#3b4a5c] px-[17px] font-bold text-white [clip-path:polygon(10px_0,100%_0,calc(100%-10px)_100%,0_100%)]">Model</button>
        <button className="ml-1.5">Layout1</button>
        <span className="mx-2.5"><Slash /></span>
        <button>Layout2</button>
        <span className="mx-2.5"><Slash /></span>
        <button>A0</button>
        <span className="mx-2.5"><Slash /></span>
        <IconButton name="plus" label="New layout" icon="size-3.5" className="ml-1" />
        <span className="ml-3.5"><Slash /></span>
      </div>
    </div>
  );
}

// 'v' is a drop-down arrow, '*' marks a switched-on tool
const statusGroups: string[][] = [
  ['stGrid', 'stDots', 'v'],
  ['stInfer', '*stDyn', 'stOrtho', 'stPolar', 'v', 'stIso', 'v'],
  ['*stTrack', 'stOsnap', 'v'],
  ['*stLwt', '*stTrans', 'stCycle', 'st3d', 'v'],
  ['*stUcs', 'stFilter', 'v'],
  ['*stGizmo', 'v'],
  ['*stA1', 'stA2', 'stA3', '=1:1000', 'v'],
  ['gear', 'v'],
  ['plus'],
  ['stRuler', '=Decimal', 'v'],
  ['stList'],
  ['stLock', 'v'],
  ['stShapes', '*stClean'],
  ['stLayers', '=3.500'],
  ['stTagFrame', 'v', '*stTag'],
  ['stHat', 'stCad', 'stBlocks'],
  ['stFull'],
  ['menu'],
];

function StatusItem({ item }: { item: string }) {
  if (item === 'v') return <button aria-label="More" className="flex w-4 items-center justify-center"><Caret className="w-[7px]" /></button>;
  if (item[0] === '=') return <button className={item === '=1:1000' ? 'px-px' : 'px-1.5'}>{item.slice(1)}</button>;
  if (item[0] === '*') return <IconButton name={item.slice(1)} label={item.slice(1)} className="h-6 w-6 bg-[#6391c4]" />;
  return <IconButton name={item} label={item} className="w-6" icon={item === 'stHat' ? 'size-[22px]' : undefined} />;
}

function StatusBar() {
  return (
    <footer className="flex h-6 shrink-0 gap-[3px] bg-[#222933] pr-0.5 text-xs text-[#f0f2f4]">
      <div className="ml-0.5 flex-1 bg-[#3b4453]" />
      <div className="flex w-[210px] items-center justify-end bg-[#3b4453] pr-1">757924.555, 4298491.211, 0.000</div>
      <button className="w-[47px] bg-[#3b4453]">MODEL</button>
      {statusGroups.map((g, n) => (
        <div key={n} className={`flex items-center bg-[#3b4453] ${g[0] === 'stHat' ? 'gap-1 px-px' : ''}`}>
          {g.map((item, i) => <StatusItem key={i} item={item} />)}
        </div>
      ))}
    </footer>
  );
}

function Taskbar() {
  return (
    <div className="flex h-2.5 shrink-0 items-start overflow-hidden bg-gradient-to-r from-[#252527] via-[#1c1a38] to-[#272628]">
      <div className="ml-[612px] mt-[7px] flex gap-px"><span className="h-1 w-[11px] bg-[#5cc8f4]" /><span className="h-1 w-[11px] bg-[#5cc8f4]" /></div>
      <div className="ml-[506px] mt-1.5 h-3 w-3 rounded-full border-2 border-[#2aa8e0]" />
      <span className="ml-auto mr-5 mt-0.5 text-[11px] text-white">3:07 PM</span>
    </div>
  );
}

export default function App() {
  return (
    <div className="flex h-screen overflow-hidden bg-[#dcdcde] font-['Open_Sans',sans-serif]">
      <div className="flex min-w-0 flex-1 flex-col bg-[#3b4453]">
        <TitleBar />
        <MenuBar />
        <RibbonTabs />
        <Ribbon />
        <FileTabs />
        <div className="flex min-h-0 flex-1">
          <Toolspace />
          <SideTabs />
          <div className="ml-[5px] flex min-w-0 flex-1 flex-col pb-1 pt-1">
            <div className="flex min-h-0 flex-1">
              <Canvas />
              <DockStrip />
            </div>
            <CommandLine />
          </div>
          <Palettes />
        </div>
        <LayoutTabs />
        <StatusBar />
        <Taskbar />
      </div>
      <div className="mt-11 mb-1 w-2 shrink-0 rounded-br border-r-2 border-[#cfcfd2] bg-[#fafafa]" />
    </div>
  );
}
